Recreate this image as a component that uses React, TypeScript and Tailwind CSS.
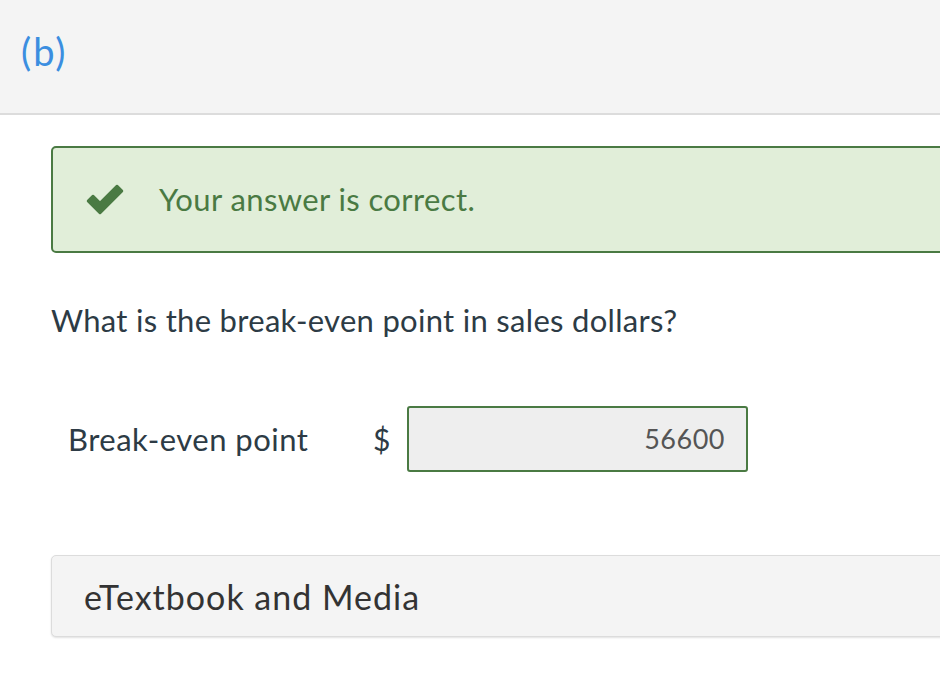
export default function App() {
  return (
    <div className="w-[940px] h-[690px] overflow-hidden bg-white font-['Lato','Liberation_Sans',sans-serif]">
      <div className="h-[115px] bg-[#f4f4f4] border-b-2 border-[#dcdcdc] pl-[21px] pt-[25px]">
        <span className="text-[38px] leading-[52px] tracking-[2px] text-[#3b8ee0]">(b)</span>
      </div>
      <div className="pl-[51px]">
        <div className="mt-[31px] h-[107px] w-[920px] flex items-center rounded-[5px] border-2 border-[#4a7a43] bg-[#e1eed9]">
          <svg className="ml-[32px] w-[40px] h-[32px]" viewBox="0 0 40 32">
            <path d="M3 17 L8 12 L15 19 L32 2 L37 7 L15 29 Z" fill="#4a7a43" strokeLinejoin="round" stroke="#4a7a43" strokeWidth="2.5" />
          </svg>
          <span className="ml-[34px] text-[31px] tracking-[0.4px] text-[#4a7a43]">Your answer is correct.</span>
        </div>
        <div className="mt-[46px] text-[31px] tracking-[0.3px] text-[#2d3b45] leading-[42px]">What is the break-even point in sales dollars?</div>
        <div className="mt-[65px] flex items-center">
          <span className="ml-[17px] w-[305px] text-[31px] tracking-[0.5px] text-[#2d3b45]">Break-even point</span>
          <span className="w-[34px] text-[30px] text-[#2d3b45]">$</span>
          <div className="w-[341px] h-[66px] flex items-center justify-end pr-[21px] rounded-[3px] border-2 border-[#4a7a43] bg-[#eeeeee] text-[27px] tracking-[0.5px] text-[#555555]">56600</div>
        </div>
        <div className="mt-[83px] h-[82px] w-[920px] flex items-center pl-[32px] rounded-[5px] border border-[#dcdcdc] bg-[#f4f4f4] shadow-[0_1px_2px_rgba(0,0,0,0.12)]">
          <span className="text-[34px] tracking-[1px] text-[#333333]">eTextbook and Media</span>
        </div>
      </div>
    </div>
  )
}
